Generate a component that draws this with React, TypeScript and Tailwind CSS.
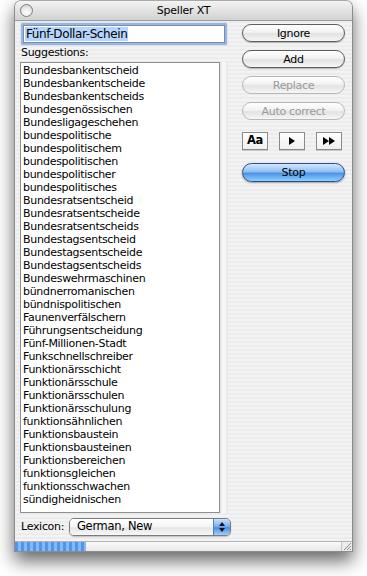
import React from 'react';

const SUGGESTIONS = [
	'Bundesbankentscheid',
	'Bundesbankentscheide',
	'Bundesbankentscheids',
	'bundesgenössischen',
	'Bundesligageschehen',
	'bundespolitische',
	'bundespolitischem',
	'bundespolitischen',
	'bundespolitischer',
	'bundespolitisches',
	'Bundesratsentscheid',
	'Bundesratsentscheide',
	'Bundesratsentscheids',
	'Bundestagsentscheid',
	'Bundestagsentscheide',
	'Bundestagsentscheids',
	'Bundeswehrmaschinen',
	'bündnerromanischen',
	'bündnispolitischen',
	'Faunenverfälschern',
	'Führungsentscheidung',
	'Fünf-Millionen-Stadt',
	'Funkschnellschreiber',
	'Funktionärsschicht',
	'Funktionärsschule',
	'Funktionärsschulen',
	'Funktionärsschulung',
	'funktionsähnlichen',
	'Funktionsbaustein',
	'Funktionsbausteinen',
	'Funktionsbereichen',
	'funktionsgleichen',
	'funktionsschwachen',
	'sündigheidnischen',
];

function PillButton({ label, disabled }: { label: string; disabled?: boolean }) {
	return (
		<button
			type="button"
			className={`h-[18px] w-full rounded-full border text-[11px] tracking-[-0.3px] leading-none bg-[linear-gradient(180deg,#ffffff_0%,#f2f2f2_45%,#e2e2e2_55%,#f6f6f6_100%)] ${
				disabled
					? 'border-[#b8b8b8] text-[#9a9a9a]'
					: 'border-[#5e5e5e] text-black shadow-[0_1px_1px_rgba(0,0,0,0.25)]'
			}`}
		>
			{label}
		</button>
	);
}

function SquareButton({ children }: { children: React.ReactNode }) {
	return (
		<button
			type="button"
			className="h-[18px] w-[26px] flex items-center justify-center border border-[#8a8a8a] bg-[linear-gradient(180deg,#ffffff,#f0f0f0)] shadow-[0_1px_0_rgba(0,0,0,0.15)]"
		>
			{children}
		</button>
	);
}

export default function App() {
	return (
		<div className="w-[367px] h-[576px] bg-white pl-[14px] font-['DejaVu_Sans',sans-serif] text-black overflow-hidden">
			<div className="w-[339px] h-[552px] flex flex-col rounded-t-[7px] border border-[#8c8c8c] border-t-[#a8a8a8] shadow-[0_9px_18px_rgba(0,0,0,0.6)] bg-[repeating-linear-gradient(180deg,#ececec_0px,#ececec_2px,#f3f3f3_2px,#f3f3f3_4px)] overflow-hidden">
				{/* title bar */}
				<div className="h-[20px] shrink-0 flex items-center border-b border-[#9c9c9c] bg-[linear-gradient(180deg,#f4f4f4_0%,#e2e2e2_50%,#d2d2d2_100%)]">
					<div className="w-[40px] pl-[5px] flex items-center">
						<div className="w-[13px] h-[13px] rounded-full border border-[#7e7e7e] bg-[radial-gradient(circle_at_50%_70%,#ffffff_0%,#eaeaea_50%,#c4c4c4_100%)]" />
					</div>
					<div className="flex-1 text-center text-[11px] tracking-[-0.2px] leading-none">Speller XT</div>
					<div className="w-[40px]" />
				</div>

				{/* body */}
				<div className="flex-1 flex pl-[5px]">
					<div className="w-[214px] flex flex-col">
						<div className="mt-[2px] ml-[1px] w-[206px] h-[22px] rounded-[2px] p-[2px] bg-[#93b7e6] shadow-[0_0_1px_#5d8fd0]">
							<div className="h-full bg-white border border-[#7a8ca6] flex items-center pl-[1px]">
								<span className="bg-[#b5d5ff] text-[12px] tracking-[-0.4px] leading-[14px] px-[1px]">Fünf-Dollar-Schein</span>
							</div>
						</div>
						<div className="h-[17px] flex items-center pl-[1px] text-[11px] tracking-[-0.3px]">Suggestions:</div>
						<div className="h-[451px] flex">
							<div className="w-[200px] border border-[#8e8e8e] bg-white pt-[1px] pl-[2px]">
								{SUGGESTIONS.map((s) => (
									<div key={s} className="h-[13px] leading-[13px] text-[11px] tracking-[-0.3px] whitespace-nowrap">
										{s}
									</div>
								))}
							</div>
							<div className="w-[8px] bg-[linear-gradient(90deg,#e0e0e0,#fbfbfb_40%,#f4f4f4_70%,#e4e4e4)]" />
						</div>
						<div className="mt-[5px] h-[18px] flex items-center">
							<span className="text-[11px] tracking-[-0.3px] pl-[1px] w-[49px]">Lexicon:</span>
							<div className="w-[162px] h-[18px] flex rounded-[5px] border border-[#7c7c7c] overflow-hidden shadow-[0_1px_1px_rgba(0,0,0,0.2)]">
								<div className="flex-1 flex items-center pl-[7px] text-[11.5px] tracking-[-0.3px] bg-[linear-gradient(180deg,#ffffff_0%,#f4f4f4_50%,#e6e6e6_55%,#f7f7f7_100%)]">
									German, New
								</div>
								<div className="w-[17px] flex flex-col items-center justify-center gap-[2px] border-l border-[#5a7fb8] bg-[linear-gradient(180deg,#c8e0fb_0%,#7fb2ee_45%,#4a8fe4_55%,#9fd0fa_100%)]">
									<svg width="6" height="4" viewBox="0 0 6 4">
										<path d="M3 0 L6 4 L0 4 Z" fill="#111" />
									</svg>
									<svg width="6" height="4" viewBox="0 0 6 4">
										<path d="M0 0 L6 0 L3 4 Z" fill="#111" />
									</svg>
								</div>
							</div>
						</div>
					</div>

					<div className="ml-[8px] w-[103px] flex flex-col">
						<div className="mt-[3px] flex flex-col gap-[8px]">
							<PillButton label="Ignore" />
							<PillButton label="Add" />
							<PillButton label="Replace" disabled />
							<PillButton label="Auto correct" disabled />
						</div>
						<div className="mt-[12px] flex gap-[11px]">
							<SquareButton>
								<span className="text-[11.5px] font-bold tracking-[-0.3px] leading-none">Aa</span>
							</SquareButton>
							<SquareButton>
								<svg width="6" height="8" viewBox="0 0 6 8">
									<path d="M0 0 L6 4 L0 8 Z" fill="#000" />
								</svg>
							</SquareButton>
							<SquareButton>
								<svg width="12" height="8" viewBox="0 0 12 8">
									<path d="M0 0 L6 4 L0 8 Z M6 0 L12 4 L6 8 Z" fill="#000" />
								</svg>
							</SquareButton>
						</div>
						<button
							type="button"
							className="mt-[13px] h-[19px] w-full rounded-full border border-[#2d4f8e] text-[11px] tracking-[-0.3px] leading-none bg-[linear-gradient(180deg,#d4e8fd_0%,#8ebff4_45%,#4c93e6_55%,#8fd0fb_100%)] shadow-[0_1px_2px_rgba(0,0,0,0.35)]"
						>
							Stop
						</button>
					</div>
				</div>

				{/* status / progress bar */}
				<div className="h-[10px] shrink-0 flex border-t border-[#b4b4b4]">
					<div className="w-[71px] bg-[repeating-linear-gradient(90deg,#4f95ec_0px,#4f95ec_3px,#86b9f4_3px,#86b9f4_6px)]" />
					<div className="flex-1 bg-[linear-gradient(180deg,#fafafa,#e8e8e8)] border-r border-[#c4c4c4]" />
					<div className="w-[10px] flex items-end justify-end bg-[#ededed]">
						<svg width="9" height="9" viewBox="0 0 9 9">
							<path d="M8 1 L1 8 M8 4 L4 8 M8 7 L7 8" stroke="#8a8a8a" strokeWidth="1" />
						</svg>
					</div>
				</div>
			</div>
		</div>
	);
}
